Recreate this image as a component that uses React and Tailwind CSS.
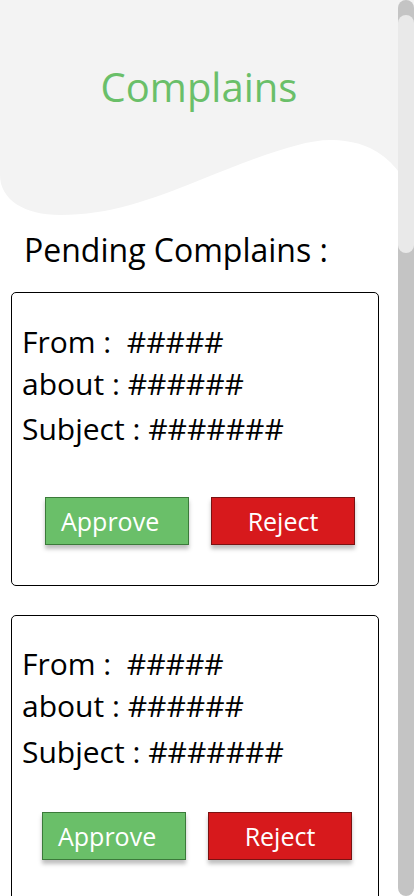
import React from "react"

const complaints = [
  { id: 1, pt: "pt-[29px]", aboutMt: "mt-[2px]", subjectMt: "mt-[5px]", btnMt: "mt-[48px]", btnMl: "ml-[33px]" },
  { id: 2, pt: "pt-[28px]", aboutMt: "mt-[2px]", subjectMt: "mt-[6px]", btnMt: "mt-[40px]", btnMl: "ml-[30px]" },
]

const ComplaintCard = ({ c }) => {
  return (
    <div className={`w-[368px] h-[294px] shrink-0 border border-black rounded-[5px] bg-white ${c.pt}`}>
      <div className="px-[10px] text-[30px] leading-[40px] text-black">
        <p className="whitespace-pre">From :  #####</p>
        <p className={`whitespace-pre ${c.aboutMt}`}>about : ######</p>
        <p className={`whitespace-pre ${c.subjectMt}`}>Subject : #######</p>
      </div>

      {/* Botones */}
      <div className={`flex gap-[22px] ${c.btnMt} ${c.btnMl}`}>
        <button className="w-[144px] h-[48px] border border-[#3b7a3a] bg-[#6abf69] text-white text-[25px] leading-[46px] text-left pl-[15px] shadow-[0_4px_4px_rgba(0,0,0,0.25)]">
          Approve
        </button>
        <button className="w-[144px] h-[48px] border border-[#7a1212] bg-[#d7191c] text-white text-[25px] leading-[46px] text-center shadow-[0_4px_4px_rgba(0,0,0,0.25)]">
          Reject
        </button>
      </div>
    </div>
  )
}

export default function App() {
  return (
    <div className="relative w-[414px] h-[896px] overflow-hidden bg-white font-['Open_Sans',sans-serif]">
      {/* wave de fondo */}
      <svg className="absolute top-0 left-0" width="414" height="230" viewBox="0 0 414 230">
        <path
          d="M0 0 H414 V200 C405 175 390 158 370 148 C355 141 340 140 330 140 C300 140 250 160 200 180 C150 200 110 215 60 215 C25 215 0 200 0 175 Z"
          fill="#f3f3f3"
        />
      </svg>

      <div className="relative flex h-full">
        <div className="w-[398px]">
          <div className="h-[230px] pt-[59px]">
            <h1 className="text-center text-[40px] leading-[56px] text-[#6abf69]">Complains</h1>
          </div>
          <h2 className="pl-[24px] text-[32px] leading-[40px] text-black">Pending Complains :</h2>

          <div className="mt-[22px] pl-[11px] flex flex-col gap-[29px]">
            {complaints.map((c) => (
              <ComplaintCard key={c.id} c={c} />
            ))}
          </div>
        </div>

        {/* scrollbar */}
        <div className="w-[16px] h-full rounded-[8px] bg-[#c4c4c4] pt-[15px]">
          <div className="h-[238px] rounded-[8px] bg-[#e9e9e9]"></div>
        </div>
      </div>
    </div>
  )
}
